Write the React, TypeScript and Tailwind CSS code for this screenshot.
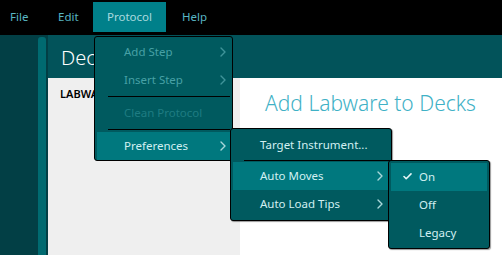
import React from "react";

const font = { fontFamily: '"Noto Sans", "Open Sans", sans-serif' };

function Chevron({ className }: { className?: string }) {
  return (
    <svg viewBox="0 0 6 10" className={className} width="6" height="10" fill="none" stroke="currentColor" strokeWidth="1.4" strokeLinecap="round" strokeLinejoin="round">
      <path d="M1 1l4 4-4 4" />
    </svg>
  );
}

function Check() {
  return (
    <svg viewBox="0 0 10 8" width="9" height="7" fill="none" stroke="currentColor" strokeWidth="1.8" strokeLinecap="round" strokeLinejoin="round">
      <path d="M1 4l2.5 2.5L9 1" />
    </svg>
  );
}

function Item({
  label,
  disabled,
  dim,
  active,
  sub,
  pl = "pl-[27px]",
  pr = "pr-[4px]",
  check,
}: {
  label: string;
  disabled?: boolean;
  dim?: boolean;
  active?: boolean;
  sub?: boolean;
  pl?: string;
  pr?: string;
  check?: boolean;
}) {
  const color = disabled ? (dim ? "text-[#1f7c82]" : "text-[#47a1a6]") : "text-[#d2f0f2]";
  return (
    <div className={`relative mx-[2px] flex h-[28px] items-center ${pl} ${pr} text-[11.5px] ${color} ${active ? "bg-[#00787e]" : ""}`}>
      {check && (
        <span className="absolute left-[12px] top-[10px] text-[#e6f6f7]">
          <Check />
        </span>
      )}
      <span className="flex-1">{label}</span>
      {sub && <Chevron className={disabled ? "text-[#3f9499]" : "text-[#a9d7da]"} />}
    </div>
  );
}

function Sep({ className }: { className: string }) {
  return <div className={`h-px bg-black ${className}`} />;
}

export default function App() {
  return (
    <div className="relative h-[255px] w-[502px] overflow-hidden bg-black" style={font}>
      {/* menu bar */}
      <div className="flex h-[35px] items-start pt-[2px] text-[11.5px] text-[#58b6c4]">
        <div className="flex h-[30px] w-[44px] items-center pl-[10px]">File</div>
        <div className="flex h-[30px] w-[49px] items-center pl-[14px]">Edit</div>
        <div className="flex h-[30px] w-[73px] items-center justify-center bg-[#00808a] text-[#aadadf]">Protocol</div>
        <div className="flex h-[30px] items-center pl-[16px]">Help</div>
      </div>

      {/* body */}
      <div className="flex h-[220px]">
        <div className="w-[38px] bg-[#023f45]" />
        <div className="flex w-[10px] bg-[#023f45] pt-[2px]">
          <div className="w-[8px] rounded-t-[3px] bg-[#006a70]" />
        </div>
        <div className="flex flex-1 flex-col">
          <div className="flex h-[43px] items-center bg-[#02535a] pl-[13px] pt-[2px] text-[20px] font-light leading-none text-white">
            Deck Setup
          </div>
          <div className="flex flex-1">
            <div className="w-[192px] bg-[#efefef] pl-[12px] pt-[8px] text-[11px] font-semibold text-black">LABWARE</div>
            <div className="flex-1 bg-white pl-[25px] pt-[15px] text-[21px] font-light leading-none text-[#3fb1c6]">
              Add Labware to Decks
            </div>
          </div>
        </div>
      </div>

      {/* Protocol menu */}
      <div className="absolute left-[94px] top-[36px] w-[139px] rounded-[3px] border border-black bg-[#005a5f] pt-px">
        <Item label="Add Step" disabled sub />
        <Item label="Insert Step" disabled sub />
        <div className="py-[2px]">
          <Sep className="ml-[13px] mr-[2px]" />
        </div>
        <Item label="Clean Protocol" disabled dim />
        <div className="py-[2px]">
          <Sep className="ml-[13px] mr-[2px]" />
        </div>
        <Item label="Preferences" active sub />
      </div>

      {/* Preferences submenu */}
      <div className="absolute left-[230px] top-[128px] w-[162px] rounded-[3px] border border-black bg-[#005a5f] pb-[2px] pt-[2px] shadow-[1px_1px_1px_rgba(0,0,0,0.4)]">
        <Item label="Target Instrument..." pr="pr-[6px]" />
        <div className="py-[1px]">
          <Sep className="ml-[13px] mr-0" />
        </div>
        <Item label="Auto Moves" active sub pr="pr-[6px]" />
        <Item label="Auto Load Tips" sub pr="pr-[6px]" />
      </div>

      {/* Auto Moves submenu */}
      <div className="absolute left-[388px] top-[160px] w-[102px] rounded-[3px] border border-black bg-[#005a5f] pb-px pt-[2px] shadow-[1px_1px_1px_rgba(0,0,0,0.4)]">
        <Item label="On" active check pl="pl-[28px]" />
        <Item label="Off" pl="pl-[28px]" />
        <Item label="Legacy" pl="pl-[28px]" />
      </div>
    </div>
  );
}
